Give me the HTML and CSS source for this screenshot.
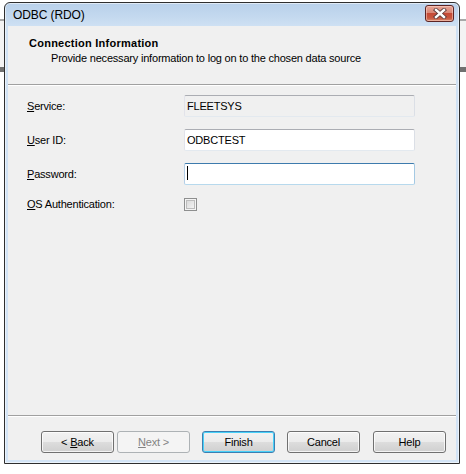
FILE: index.html
```html
<!DOCTYPE html>
<html>
<head>
<meta charset="utf-8">
<link rel="stylesheet" href="styles.css">
</head>
<body>
<div class="window">
  <div class="titlebar">
    <span class="title">ODBC (RDO)</span>
    <div class="close">
      <svg width="14" height="11" viewBox="0 0 14 11">
        <path d="M3 2 L11 9 M11 2 L3 9" stroke="#5a3a3a" stroke-width="4.2" stroke-linecap="square" fill="none"/>
        <path d="M3 2 L11 9 M11 2 L3 9" stroke="#ffffff" stroke-width="2.4" stroke-linecap="square" fill="none"/>
      </svg>
    </div>
  </div>
  <div class="client">
    <div class="header">
      <div class="h-title">Connection Information</div>
      <div class="h-sub">Provide necessary information to log on to the chosen data source</div>
    </div>
    <div class="sep"></div>
    <div class="form">
      <label class="lbl"><u>S</u>ervice:</label>
      <div class="field readonly">FLEETSYS</div>
      <label class="lbl"><u>U</u>ser ID:</label>
      <div class="field">ODBCTEST</div>
      <label class="lbl"><u>P</u>assword:</label>
      <div class="field focused"><span class="caret"></span></div>
      <label class="lbl"><u>O</u>S Authentication:</label>
      <div class="checkrow"><span class="checkbox"></span></div>
    </div>
    <div class="spacer"></div>
    <div class="sep"></div>
    <div class="buttons">
      <button class="btn back">&lt; <u>B</u>ack</button>
      <button class="btn next disabled"><u>N</u>ext &gt;</button>
      <button class="btn finish default">Finish</button>
      <button class="btn cancel">Cancel</button>
      <button class="btn help">Help</button>
    </div>
  </div>
</div>
</body>
</html>
```

FILE: styles.css
```css
html, body {
  margin: 0;
  padding: 0;
}
body {
  width: 466px;
  height: 474px;
  overflow: hidden;
  font-family: "Liberation Sans", Arial, sans-serif;
  font-size: 11px;
  letter-spacing: -0.2px;
  color: #000;
  background: linear-gradient(to bottom,
    #ffffff 0px, #ffffff 19px,
    #a8a8a8 19px, #a8a8a8 21px,
    #f3f3f3 21px, #f3f3f3 67px,
    #707070 67px, #707070 72px,
    #ffffff 72px, #ffffff 474px);
  padding-top: 2px;
  padding-left: 4px;
  box-sizing: border-box;
}
.window {
  width: 456px;
  height: 462px;
  box-sizing: border-box;
  border: 1px solid #2e2e2e;
  border-radius: 6px 6px 0 0;
  background: linear-gradient(to bottom, #b8d0ea 0px, #c4d9ef 14px, #cfe1f4 24px, #d3e4f6 100%);
  padding: 0 3px 3px 3px;
  display: flex;
  flex-direction: column;
  box-shadow: inset 0 0 0 1px rgba(255,255,255,0.55);
}
.titlebar {
  height: 23px;
  display: flex;
  align-items: center;
  position: relative;
}
.title {
  font-size: 12px;
  margin-left: 5px;
  color: #000;
  letter-spacing: -0.1px;
}
.close {
  position: absolute;
  right: 2px;
  top: 2px;
  width: 29px;
  height: 17px;
  box-sizing: border-box;
  border: 1px solid #5c2424;
  border-radius: 3px;
  background: linear-gradient(to bottom, #e8a496 0%, #d88877 45%, #c54a36 50%, #c8573f 80%, #d88a6e 100%);
  box-shadow: inset 0 0 0 1px rgba(255,220,210,0.5);
  display: flex;
  align-items: center;
  justify-content: center;
}
.client {
  flex: 1;
  background: #f0f0f0;
  display: flex;
  flex-direction: column;
}
.header {
  height: 58px;
  box-sizing: border-box;
  padding: 10px 0 0 21px;
}
.h-title {
  font-weight: bold;
  font-size: 11px;
  line-height: 14px;
  letter-spacing: 0.25px;
}
.h-sub {
  margin-left: 22px;
  margin-top: 1px;
  line-height: 14px;
}
.sep {
  height: 1px;
  background: #a0a0a0;
  border-bottom: 1px solid #ffffff;
}
.form {
  display: grid;
  grid-template-columns: 157px 231px;
  grid-template-rows: 22px 22px 22px 14px;
  row-gap: 12px;
  padding: 9px 0 0 19px;
  align-items: center;
}
.lbl {
  line-height: 14px;
}
.lbl u {
  text-decoration-thickness: 1px;
  text-underline-offset: 1px;
}
.field {
  height: 22px;
  box-sizing: border-box;
  background: #ffffff;
  border: 1px solid;
  border-color: #abadb3 #dbdfe6 #e3e9ef #e2e3ea;
  border-radius: 2px;
  padding: 3px 0 0 2px;
  line-height: 14px;
}
.field.readonly {
  background: #f0f0f0;
}
.field.focused {
  border-color: #3d7bad #a4c9e3 #b7d9ed #b5cfe7;
  padding: 2px 0 0 2px;
}
.caret {
  display: block;
  width: 1px;
  height: 14px;
  background: #000;
}
.checkrow {
  display: flex;
  align-items: flex-end;
  height: 14px;
}
.checkbox {
  width: 13px;
  height: 13px;
  box-sizing: border-box;
  border: 1px solid #8e8f8f;
  background: linear-gradient(135deg, #d4d4d4 0%, #e6e6e6 50%, #f9f9f9 100%);
  box-shadow: inset 0 0 0 1px #f4f4f4, inset 0 0 0 2px #bcbcbc;
}
.spacer {
  flex: 1;
}
.buttons {
  display: flex;
  padding: 14px 0 7px 33px;
  height: 22px;
}
.btn {
  width: 73px;
  height: 22px;
  box-sizing: border-box;
  border: 1px solid #707070;
  border-radius: 3px;
  background: linear-gradient(to bottom, #f2f2f2 0%, #ebebeb 50%, #dddddd 51%, #cfcfcf 100%);
  box-shadow: inset 0 0 0 1px rgba(255,255,255,0.75);
  font-family: "Liberation Sans", Arial, sans-serif;
  font-size: 11px;
  letter-spacing: -0.2px;
  color: #000;
  padding: 0;
  line-height: 18px;
  text-align: center;
}
.btn.next {
  margin-left: 3px;
}
.btn.finish {
  margin-left: 12px;
}
.btn.cancel {
  margin-left: 12px;
}
.btn.help {
  margin-left: 13px;
}
.btn.disabled {
  border-color: #adb2b5;
  background: #f4f4f4;
  color: #838383;
  box-shadow: none;
}
.btn.default {
  border-color: #3c7fb1;
  box-shadow: inset 0 0 0 1px #48d1f9;
}
```
